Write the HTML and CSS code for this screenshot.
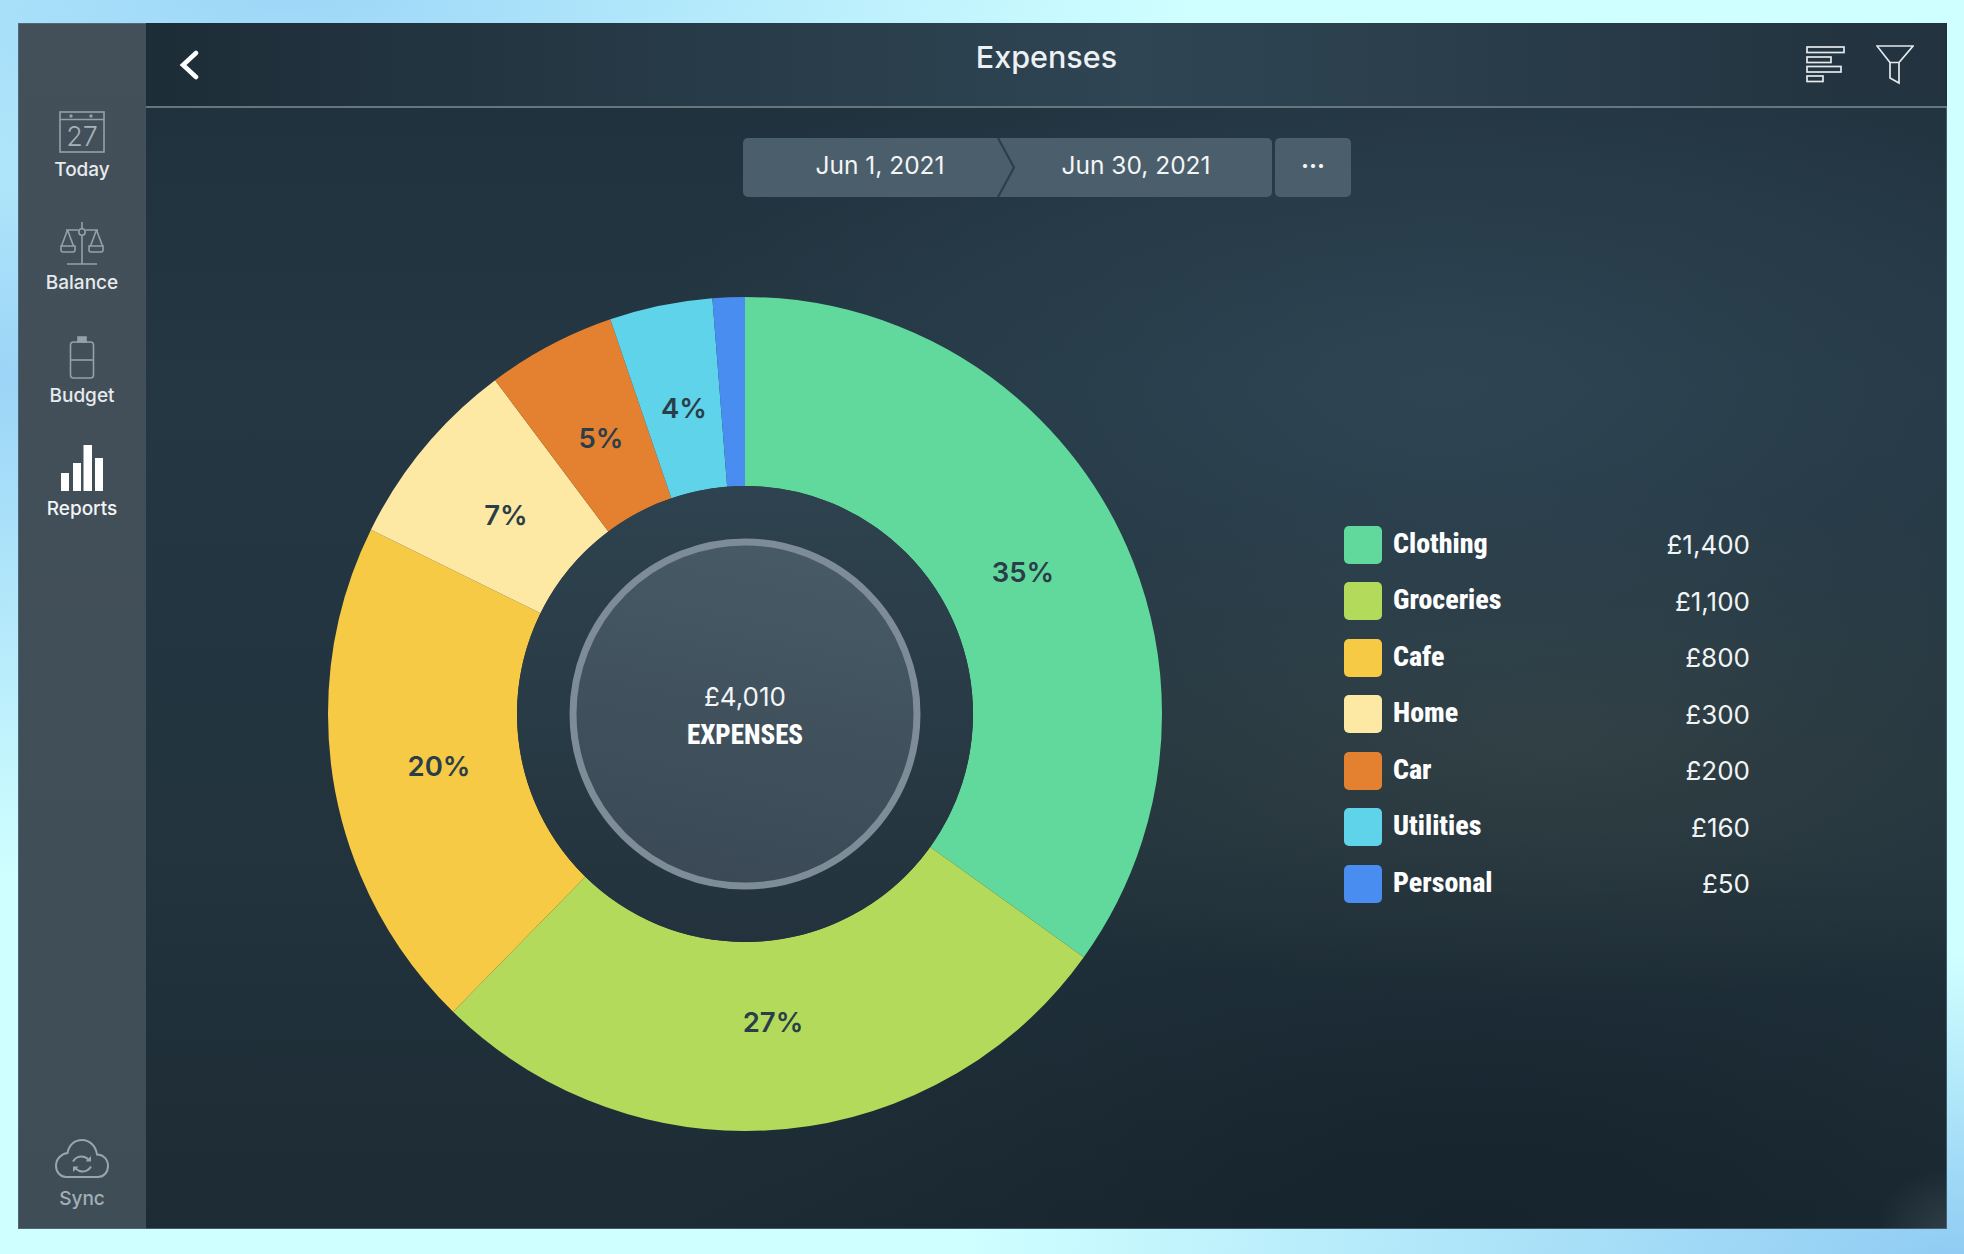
FILE: index.html
```html
<!DOCTYPE html>
<html lang="en">
<head>
<meta charset="UTF-8">
<title>Expenses</title>
<link rel="stylesheet" href="styles.css">
</head>
<body>
<div class="window">
  <nav class="sidebar">
    <a class="nav-item">
      <svg class="nav-icon" width="48" height="44" viewBox="0 0 48 44" fill="none" stroke="#95a1a9" stroke-width="1.600">
        <rect x="2" y="2" width="44" height="40"/>
        <path d="M2 9.500H46"/>
        <circle cx="13" cy="6" r="0.900" fill="#95a1a9"/>
        <circle cx="33" cy="6" r="0.900" fill="#95a1a9"/>
        <text x="24" y="36" class="cal-day" text-anchor="middle">27</text>
      </svg>
      <span>Today</span>
    </a>
    <a class="nav-item">
      <svg class="nav-icon" width="44" height="46" viewBox="0 0 44 46" fill="none" stroke="#95a1a9" stroke-width="1.600">
        <path d="M22 0V7M22 13V42M7 42H37M6 8H18.500M25.500 8H38"/>
        <circle cx="22" cy="10" r="3.200"/>
        <path d="M7.500 8L1.500 24M7.500 8L13.500 24M36.500 8L30.500 24M36.500 8L42.500 24"/>
        <path d="M1 24H15V28Q15 30 13 30H3Q1 30 1 28ZM29 24H43V28Q43 30 41 30H31Q29 30 29 28Z"/>
      </svg>
      <span>Balance</span>
    </a>
    <a class="nav-item">
      <svg class="nav-icon" width="26" height="44" viewBox="0 0 26 44" fill="none" stroke="#95a1a9" stroke-width="1.600">
        <path d="M9 1H17V6H9Z" fill="#95a1a9"/>
        <rect x="1.500" y="6" width="23" height="36" rx="3"/>
        <path d="M1.500 24H24.500"/>
      </svg>
      <span>Budget</span>
    </a>
    <a class="nav-item active">
      <svg class="nav-icon" width="42" height="46" viewBox="0 3 42 46" fill="#fff">
        <rect x="0" y="28" width="8" height="18"/>
        <rect x="12" y="18" width="8" height="28"/>
        <rect x="22.500" y="0" width="8.500" height="46"/>
        <rect x="34" y="13" width="8" height="33"/>
      </svg>
      <span>Reports</span>
    </a>
    <a class="nav-item sync">
      <svg class="nav-icon" width="54" height="40" viewBox="0 0 54 40" fill="none" stroke="#9aa6ae" stroke-width="2">
        <path d="M11 38H43C49 38 53 33 53 27C53 20 48 15.500 42 15.500C41 7.500 35 1 27 1C19.500 1 14 6 12.500 14C6 15 1 20 1 27C1 33 5.500 38 11 38Z"/>
        <g transform="translate(0 4)">
          <path d="M18 18.500C20 14.500 25 12.500 29.500 14C31.500 14.700 33 15.800 34 17.500"/>
          <path d="M36 23.500C34 27.500 29 29.500 24.500 28C22.500 27.300 21 26.200 20 24.500"/>
          <path d="M30.500 18.500H36V13ZM23.500 23.500H18V29Z" fill="#9aa6ae" stroke="none"/>
        </g>
      </svg>
      <span>Sync</span>
    </a>
  </nav>

  <main class="main">
    <header class="topbar">
      <svg class="back" width="20" height="30" viewBox="0 0 20 30" fill="none" stroke="#fff" stroke-width="4.500" stroke-linecap="round">
        <path d="M17 3L4 15L17 27"/>
      </svg>
      <h1 class="title">Expenses</h1>
      <div class="topbar-icons">
        <svg width="40" height="38" viewBox="0 0 40 38" fill="none" stroke="#e4e9ec" stroke-width="1.700">
          <rect x="1" y="1" width="37" height="5.500"/>
          <rect x="1" y="11" width="24" height="5.500"/>
          <rect x="1" y="20.500" width="34" height="5.500"/>
          <rect x="1" y="30" width="16" height="5.500"/>
        </svg>
        <svg width="38" height="40" viewBox="0 0 38 40" fill="none" stroke="#e4e9ec" stroke-width="1.700">
          <path d="M1 1H37L23 17.500V38L14 33V17.500ZM14 17.500H23"/>
        </svg>
      </div>
    </header>

    <div class="range">
      <div class="range-dates">
        <div class="range-date">Jun 1, 2021</div>
        <div class="range-date second">Jun 30, 2021</div>
        <svg class="chevron" width="24" height="59" viewBox="0 0 24 59" fill="none" stroke="#2b3f4c" stroke-width="2.200">
          <path d="M4 0L20 29.500L4 59"/>
        </svg>
      </div>
      <div class="range-more">···</div>
    </div>

    <section class="report">
      <svg class="donut" width="834" height="834" viewBox="0 0 834 834">
        <defs>
          <linearGradient id="holeFill" x1="0" y1="0" x2="0" y2="1">
            <stop offset="0" stop-color="#2e434f"/>
            <stop offset="1" stop-color="#23323c"/>
          </linearGradient>
          <linearGradient id="innerFill" x1="0.6" y1="0" x2="0.4" y2="1">
            <stop offset="0" stop-color="#475a65"/>
            <stop offset="1" stop-color="#3a4955"/>
          </linearGradient>
        </defs>
        <g fill="none" stroke-width="189" transform="rotate(-90 417 417)">
          <circle cx="417" cy="417" r="322.500" pathLength="100" stroke="#62d99c" stroke-dasharray="34.91 65.09" stroke-dashoffset="0"/>
          <circle cx="417" cy="417" r="322.500" pathLength="100" stroke="#b4da5b" stroke-dasharray="27.43 72.57" stroke-dashoffset="-34.91"/>
          <circle cx="417" cy="417" r="322.500" pathLength="100" stroke="#f6ca44" stroke-dasharray="19.95 80.05" stroke-dashoffset="-62.34"/>
          <circle cx="417" cy="417" r="322.500" pathLength="100" stroke="#fde8a4" stroke-dasharray="7.48 92.52" stroke-dashoffset="-82.29"/>
          <circle cx="417" cy="417" r="322.500" pathLength="100" stroke="#e48131" stroke-dasharray="4.99 95.01" stroke-dashoffset="-89.77"/>
          <circle cx="417" cy="417" r="322.500" pathLength="100" stroke="#5fd3e9" stroke-dasharray="3.99 96.01" stroke-dashoffset="-94.76"/>
          <circle cx="417" cy="417" r="322.500" pathLength="100" stroke="#4a8df0" stroke-dasharray="1.25 98.75" stroke-dashoffset="-98.75"/>
        </g>
        <circle cx="417" cy="417" r="228" fill="url(#holeFill)"/>
        <circle cx="417" cy="417" r="172" fill="url(#innerFill)" stroke="#7e8c97" stroke-width="7"/>
        <g class="pct" text-anchor="middle">
          <text x="695" y="285">35%</text>
          <text x="445" y="735">27%</text>
          <text x="111" y="479">20%</text>
          <text x="178" y="228">7%</text>
          <text x="273" y="151">5%</text>
          <text x="356" y="121">4%</text>
        </g>
        <text class="total" x="417" y="409" text-anchor="middle">£4,010</text>
        <text class="total-label" x="417" y="447" text-anchor="middle">EXPENSES</text>
      </svg>

      <ul class="legend">
        <li class="legend-row"><i class="swatch clothing"></i><b>Clothing</b><span>£1,400</span></li>
        <li class="legend-row"><i class="swatch groceries"></i><b>Groceries</b><span>£1,100</span></li>
        <li class="legend-row"><i class="swatch cafe"></i><b>Cafe</b><span>£800</span></li>
        <li class="legend-row"><i class="swatch home"></i><b>Home</b><span>£300</span></li>
        <li class="legend-row"><i class="swatch car"></i><b>Car</b><span>£200</span></li>
        <li class="legend-row"><i class="swatch utilities"></i><b>Utilities</b><span>£160</span></li>
        <li class="legend-row"><i class="swatch personal"></i><b>Personal</b><span>£50</span></li>
      </ul>
    </section>
  </main>
</div>
</body>
</html>
```
FILE: styles.css
```css
* {
  box-sizing: border-box;
}

html, body {
  height: 100%;
}

body {
  margin: 0;
  padding: 23px 17px 25px 18px;
  overflow: hidden;
  font-family: "Inter", "Roboto", sans-serif;
  color: #fff;
  background:
    radial-gradient(ellipse 900px 500px at 0% 30%, #9bd4f7 0%, rgba(155, 212, 247, 0) 100%),
    radial-gradient(ellipse 1000px 300px at 100% 100%, #8fcbf3 0%, rgba(143, 203, 243, 0) 100%),
    radial-gradient(ellipse 900px 200px at 15% 0%, #9dd7f8 0%, rgba(157, 215, 248, 0) 100%),
    #cfffff;
}

.window {
  display: flex;
  height: 100%;
  outline: 1px solid rgba(90, 120, 140, 0.6);
  outline-offset: -1px;
}

/* left nav */
.sidebar {
  display: flex;
  flex-direction: column;
  width: 128px;
  padding-top: 85px;
  background: linear-gradient(180deg, #435059 0%, #3f4d57 100%);
}

.nav-item {
  display: flex;
  flex-direction: column;
  align-items: center;
  height: 113px;
  font-size: 19px;
  font-weight: 500;
  color: #e6eaed;
}

.nav-item .nav-icon {
  height: 48px;
  margin-bottom: 2px;
  overflow: visible;
}

.nav-item.active {
  color: #f2f4f5;
}

.nav-item.sync {
  margin-top: auto;
  height: 94px;
  color: #a4afb6;
}

.nav-item.sync .nav-icon {
  margin-bottom: 4px;
}

.cal-day {
  font-size: 27px;
  font-weight: 300;
  fill: #a6b1b8;
  stroke: none;
}

/* main panel */
.main {
  flex: 1;
  display: flex;
  flex-direction: column;
  background:
    radial-gradient(ellipse 70px 60px at 100% 100%, rgba(52, 66, 76, 0.8) 0%, rgba(52, 66, 76, 0) 100%),
    radial-gradient(ellipse 800px 420px at 72% 30%, rgba(56, 82, 98, 0.5) 0%, rgba(56, 82, 98, 0) 100%),
    radial-gradient(ellipse 700px 260px at 78% 60%, rgba(66, 76, 72, 0.45) 0%, rgba(66, 76, 72, 0) 100%),
    radial-gradient(ellipse 800px 420px at 74% 100%, rgba(18, 32, 42, 0.7) 0%, rgba(18, 32, 42, 0) 100%),
    linear-gradient(180deg, #1f303c 0%, #243743 30%, #22333d 70%, #1d2b34 100%);
}

.topbar {
  position: relative;
  display: flex;
  align-items: center;
  justify-content: space-between;
  height: 85px;
  padding: 0 33px;
  border-bottom: 2.500px solid #66767f;
  background: linear-gradient(90deg, #1d2d38 0%, #2f4553 55%, #22323e 100%);
}

.title {
  position: absolute;
  left: 0;
  right: 0;
  top: 15px;
  margin: 0;
  text-align: center;
  font-size: 30.500px;
  font-weight: 500;
  color: #eef1f3;
}

.topbar-icons {
  display: flex;
  align-items: center;
  gap: 30px;
}

/* date range */
.range {
  display: flex;
  gap: 3px;
  height: 59px;
  margin: 30px 0 0 597px;
}

.range-dates {
  position: relative;
  display: flex;
  width: 529px;
  border-radius: 5px;
  background: #4b5e6c;
}

.range-date {
  width: 274px;
  line-height: 55px;
  text-align: center;
  font-size: 24.500px;
  color: #f3f5f6;
}

.range-date.second {
  flex: 1;
  width: auto;
  padding-right: 17px;
}

.chevron {
  position: absolute;
  top: 0;
  left: 251px;
}

.range-more {
  width: 76px;
  border-radius: 5px;
  background: #4b5e6c;
  line-height: 55px;
  text-align: center;
  font-size: 24px;
  font-weight: 700;
  color: #f3f5f6;
}

/* chart and legend */
.report {
  display: flex;
  align-items: center;
  gap: 182px;
  margin-top: 100px;
  padding-left: 182px;
}

.donut {
  flex: none;
}

.pct text {
  font-size: 27.500px;
  font-weight: 600;
  fill: #2a3e49;
}

.total {
  font-size: 26px;
  fill: #f3f5f6;
}

.total-label,
.legend-row b {
  font-family: "Roboto", sans-serif;
  font-stretch: 75%;
  font-weight: 800;
}

.total-label {
  font-size: 27px;
  fill: #fff;
}

.legend {
  width: 406px;
  margin: 0;
  padding: 0;
  list-style: none;
}

.legend-row {
  display: flex;
  align-items: center;
  height: 38px;
  margin-bottom: 18.500px;
  font-size: 26px;
}

.legend-row:last-child {
  margin-bottom: 0;
}

.legend-row b {
  flex: 1;
  margin: -3px 0 0 11px;
  font-size: 28px;
}

.legend-row span {
  color: #f1f4f5;
}

.swatch {
  width: 38px;
  height: 38px;
  border-radius: 5px;
}

.clothing { background: #62d99c; }
.groceries { background: #b4da5b; }
.cafe { background: #f6ca44; }
.home { background: #fde8a4; }
.car { background: #e48131; }
.utilities { background: #5fd3e9; }
.personal { background: #4a8df0; }
```
